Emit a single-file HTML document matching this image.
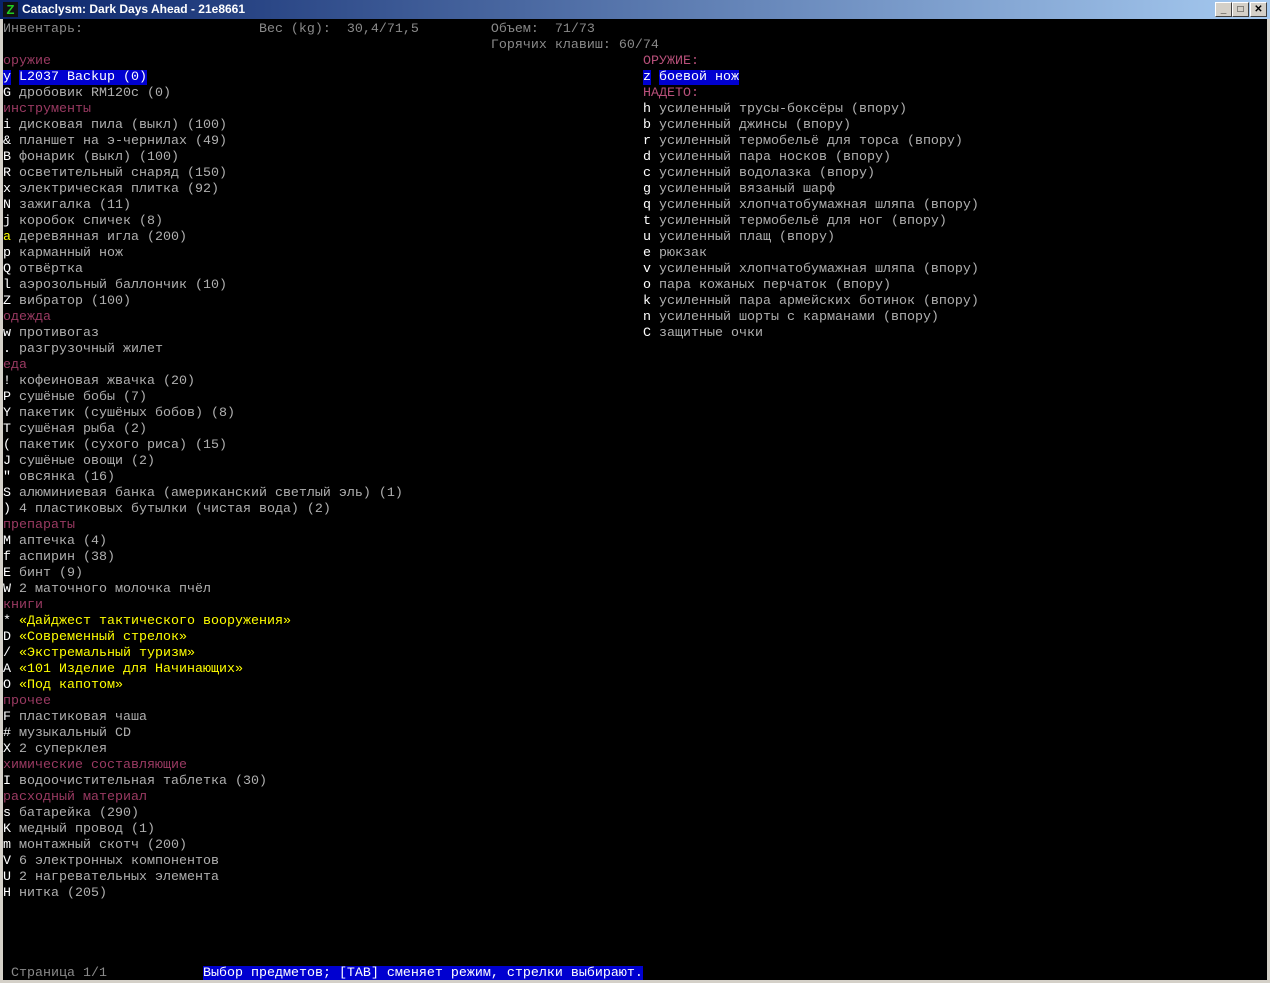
<!DOCTYPE html>
<html><head><meta charset="utf-8"><style>
html,body{margin:0;padding:0;width:1270px;height:983px;overflow:hidden;background:#d4d0c8;}
#title{position:absolute;left:0;top:0;width:1270px;height:19px;background:linear-gradient(to right,#0a246a,#a6caf0);}
#title .t{position:absolute;left:22px;top:2px;font:bold 12px "Liberation Sans",sans-serif;color:#fff;}
#ico{position:absolute;left:3px;top:2px;width:15px;height:15px;background:#111;color:#2c2;font:bold 13px "Liberation Sans",sans-serif;text-align:center;line-height:15px;}
.btn{position:absolute;top:2px;width:15px;height:13px;background:#d4d0c8;border:1px solid;border-color:#fff #404040 #404040 #fff;font:bold 10px "Liberation Sans",sans-serif;text-align:center;line-height:13px;color:#000;}
#term{position:absolute;left:3px;top:19px;width:1264px;height:961px;background:#000;overflow:hidden;}
pre{position:absolute;margin:0;font:13.33px "Liberation Mono","DejaVu Sans Mono",monospace;line-height:16px;color:#b0b0b0;}
.h{color:#9a3a62}.H{color:#b8507a}.w{color:#fff}.y{color:#ff0}.d{color:#8a8a8a}
.s{background:#0000d0;color:#fff}
</style></head><body>
<div id="title"><div id="ico">Z</div><div class="t">Cataclysm: Dark Days Ahead - 21e8661</div>
<div class="btn" style="left:1215px">_</div><div class="btn" style="left:1232px">□</div><div class="btn" style="left:1250px">✕</div></div>
<div id="term">
<pre style="left:0;top:3px"><span class="d">Инвентарь:                      Вес (kg):  30,4/71,5         Объем:  71/73</span>
<span class="d">                                                             Горячих клавиш: 60/74</span>
<span class="h">оружие</span>
<span class="s">y</span> <span class="s">L2037 Backup (0)</span>
<span class="w">G</span> дробовик RM120c (0)
<span class="h">инструменты</span>
<span class="w">i</span> дисковая пила (выкл) (100)
<span class="w">&amp;</span> планшет на э-чернилах (49)
<span class="w">B</span> фонарик (выкл) (100)
<span class="w">R</span> осветительный снаряд (150)
<span class="w">x</span> электрическая плитка (92)
<span class="w">N</span> зажигалка (11)
<span class="w">j</span> коробок спичек (8)
<span class="y">a</span> деревянная игла (200)
<span class="w">p</span> карманный нож
<span class="w">Q</span> отвёртка
<span class="w">l</span> аэрозольный баллончик (10)
<span class="w">Z</span> вибратор (100)
<span class="h">одежда</span>
<span class="w">w</span> противогаз
<span class="w">.</span> разгрузочный жилет
<span class="h">еда</span>
<span class="w">!</span> кофеиновая жвачка (20)
<span class="w">P</span> сушёные бобы (7)
<span class="w">Y</span> пакетик (сушёных бобов) (8)
<span class="w">T</span> сушёная рыба (2)
<span class="w">(</span> пакетик (сухого риса) (15)
<span class="w">J</span> сушёные овощи (2)
<span class="w">"</span> овсянка (16)
<span class="w">S</span> алюминиевая банка (американский светлый эль) (1)
<span class="w">)</span> 4 пластиковых бутылки (чистая вода) (2)
<span class="h">препараты</span>
<span class="w">M</span> аптечка (4)
<span class="w">f</span> аспирин (38)
<span class="w">E</span> бинт (9)
<span class="w">W</span> 2 маточного молочка пчёл
<span class="h">книги</span>
<span class="w">*</span> <span class="y">«Дайджест тактического вооружения»</span>
<span class="w">D</span> <span class="y">«Современный стрелок»</span>
<span class="w">/</span> <span class="y">«Экстремальный туризм»</span>
<span class="w">A</span> <span class="y">«101 Изделие для Начинающих»</span>
<span class="w">O</span> <span class="y">«Под капотом»</span>
<span class="h">прочее</span>
<span class="w">F</span> пластиковая чаша
<span class="w">#</span> музыкальный CD
<span class="w">X</span> 2 суперклея
<span class="h">химические составляющие</span>
<span class="w">I</span> водоочистительная таблетка (30)
<span class="h">расходный материал</span>
<span class="w">s</span> батарейка (290)
<span class="w">K</span> медный провод (1)
<span class="w">m</span> монтажный скотч (200)
<span class="w">V</span> 6 электронных компонентов
<span class="w">U</span> 2 нагревательных элемента
<span class="w">H</span> нитка (205)




<span class="d"> Страница 1/1</span>            <span class="s">Выбор предметов; [TAB] сменяет режим, стрелки выбирают.</span></pre>
<pre style="left:640px;top:35px"><span class="H">ОРУЖИЕ:</span>
<span class="s">z</span> <span class="s">боевой нож</span>
<span class="H">НАДЕТО:</span>
<span class="w">h</span> усиленный трусы-боксёры (впору)
<span class="w">b</span> усиленный джинсы (впору)
<span class="w">r</span> усиленный термобельё для торса (впору)
<span class="w">d</span> усиленный пара носков (впору)
<span class="w">c</span> усиленный водолазка (впору)
<span class="w">g</span> усиленный вязаный шарф
<span class="w">q</span> усиленный хлопчатобумажная шляпа (впору)
<span class="w">t</span> усиленный термобельё для ног (впору)
<span class="w">u</span> усиленный плащ (впору)
<span class="w">e</span> рюкзак
<span class="w">v</span> усиленный хлопчатобумажная шляпа (впору)
<span class="w">o</span> пара кожаных перчаток (впору)
<span class="w">k</span> усиленный пара армейских ботинок (впору)
<span class="w">n</span> усиленный шорты с карманами (впору)
<span class="w">C</span> защитные очки</pre>
</div>
</body></html>
